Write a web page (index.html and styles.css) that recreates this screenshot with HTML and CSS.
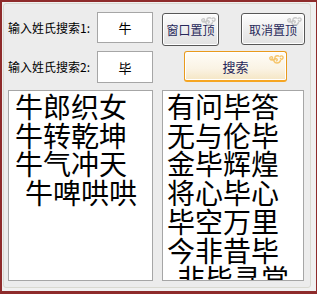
FILE: index.html
```html
<!DOCTYPE html>
<html>
<head>
    <title>姓氏搜索</title>
    <meta charset="utf-8">
    <link rel="stylesheet" href="styles.css">
</head>
<body>
    <div class="window">
        <div class="panel">
            <div class="row row-top">
                <label class="caption" for="name1">输入姓氏搜索1:</label>
                <input class="field" id="name1" type="text" value="牛">
                <button class="btn btn-pin" type="button">窗口置顶
                    <svg class="curl" viewBox="0 0 16 11"><path d="M9 9c-3 0-4-3-2-4s3 1 1.5 1.8M9 9c2 0 3-1 3.5-2.5M4 6c-2 0-3-2-1.5-3s2.5 .5 1.5 1.5M4 6c2 0 3-1 3-2.5s2-2 3.5-1.5M12 2.5c1.5-1.5 3.5 0 3 1.5s-2 1.5-2.5.5"/></svg>
                </button>
                <button class="btn btn-unpin" type="button">取消置顶
                    <svg class="curl" viewBox="0 0 16 11"><path d="M9 9c-3 0-4-3-2-4s3 1 1.5 1.8M9 9c2 0 3-1 3.5-2.5M4 6c-2 0-3-2-1.5-3s2.5 .5 1.5 1.5M4 6c2 0 3-1 3-2.5s2-2 3.5-1.5M12 2.5c1.5-1.5 3.5 0 3 1.5s-2 1.5-2.5.5"/></svg>
                </button>
            </div>
            <div class="row row-second">
                <label class="caption" for="name2">输入姓氏搜索2:</label>
                <input class="field" id="name2" type="text" value="毕">
                <button class="btn btn-search" type="button">搜索
                    <svg class="curl" viewBox="0 0 16 11"><path d="M9 9c-3 0-4-3-2-4s3 1 1.5 1.8M9 9c2 0 3-1 3.5-2.5M4 6c-2 0-3-2-1.5-3s2.5 .5 1.5 1.5M4 6c2 0 3-1 3-2.5s2-2 3.5-1.5M12 2.5c1.5-1.5 3.5 0 3 1.5s-2 1.5-2.5.5"/></svg>
                </button>
            </div>
            <div class="row row-results">
                <div class="memo memo-left">
                    <div>牛郎织女</div>
                    <div>牛转乾坤</div>
                    <div>牛气冲天</div>
                    <div class="indent">牛啤哄哄</div>
                </div>
                <div class="memo memo-right">
                    <div>有问毕答</div>
                    <div>无与伦毕</div>
                    <div>金毕辉煌</div>
                    <div>将心毕心</div>
                    <div>毕空万里</div>
                    <div>今非昔毕</div>
                    <div class="indent">非毕寻常</div>
                </div>
            </div>
        </div>
    </div>
</body>
</html>
```

FILE: styles.css
```css
body {
    margin: 0;
    font-family: "Noto Sans CJK SC", "Liberation Sans", sans-serif;
    font-size: 12px;
    background: #f0f0f0;
}
.window {
    width: 317px;
    height: 294px;
    box-sizing: border-box;
    border-style: solid;
    border-color: #8e2b2b;
    border-width: 2px 1px 3px 2px;
    background: #f0f0f0;
    padding: 1px 5px 3px 1px;
}
.panel {
    height: 100%;
    box-sizing: border-box;
    border: 1px solid #d9d9d1;
    border-radius: 3px;
    background: #ececec;
    padding: 8px 0 0 4px;
}
.row {
    display: flex;
    align-items: flex-start;
}
.row-top {
    height: 34px;
}
.row-second {
    margin-top: 5px;
    height: 32px;
}
.row-results {
    margin-top: 7px;
}
.caption {
    width: 89px;
    height: 31px;
    line-height: 31px;
    color: #000;
    white-space: nowrap;
}
.row-second .caption {
    height: 32px;
    line-height: 32px;
}
.field {
    width: 56px;
    height: 31px;
    box-sizing: border-box;
    margin: 0;
    border: 1px solid #a6a6a6;
    background: #fff;
    text-align: center;
    font-family: inherit;
    font-size: 13px;
    color: #000;
    padding: 0;
}
.row-second .field {
    height: 32px;
}
.btn {
    position: relative;
    box-sizing: border-box;
    margin: 1px 0 0 0;
    padding: 0;
    border: 1px solid #575757;
    border-radius: 3px;
    background: linear-gradient(#fdfdfd, #ebebeb 60%, #e2e2e2);
    color: #27285a;
    font-family: inherit;
    font-size: 12px;
    cursor: pointer;
    box-shadow: inset 0 0 0 1px #fff;
}
.btn-pin {
    width: 57px;
    height: 33px;
    margin-left: 9px;
}
.btn-unpin {
    width: 64px;
    height: 32px;
    margin-left: 22px;
}
.btn-search {
    width: 103px;
    height: 31px;
    margin: 0 0 0 31px;
    border: 1px solid #e99a1c;
    border-bottom: 2px solid #f6a623;
    background: linear-gradient(#fffdf8, #faf3e4 60%, #f5e6c4);
    font-size: 13px;
}
.curl {
    position: absolute;
    top: 2px;
    right: 2px;
    width: 16px;
    height: 11px;
    fill: none;
    stroke: #c8c8c8;
    stroke-width: 1.4;
    stroke-linecap: round;
}
.btn-search .curl {
    stroke: #f6c56a;
}
.memo {
    height: 191px;
    box-sizing: border-box;
    border: 1px solid #a6a6a6;
    background: #fff;
    overflow: hidden;
    padding: 1px 0 0 6px;
    font-size: 28px;
    line-height: 28.7px;
    color: #000;
}
.memo-left {
    width: 145px;
}
.memo-right {
    width: 142px;
    margin-left: 9px;
    padding-left: 4px;
}
.indent {
    padding-left: 10px;
}
```
